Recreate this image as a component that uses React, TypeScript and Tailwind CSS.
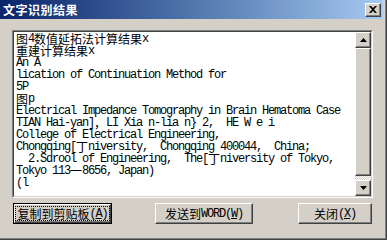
import React from 'react';

const lines = [
  '图4数值延拓法计算结果x',
  '重建计算结果x',
  'An A',
  'lication of Continuation Method for',
  '5P',
  '图p',
  'Electrical Impedance Tomography in Brain Hematoma Case',
  'TIAN Hai-yan]，LI Xia n-lia n} 2,  HE W e i',
  'College of Electrical Engineering,',
  'Chongqing[丁niversity,  Chongqing 400044,  China;',
  '  2.Sdrool of Engineering,  The[丁niversity of Tokyo,',
  'Tokyo 113一8656, Japan)',
  '(l',
];

// SimSun-like look: latin glyphs 6px wide, CJK glyphs 12px wide
function Mixed({ text }: { text: string }) {
  const parts = text.split(/([\u3000-\u9fff\uff00-\uffef]+)/).filter(Boolean);
  return (
    <>
      {parts.map((p, i) =>
        /[\u3000-\u9fff\uff00-\uffef]/.test(p) ? (
          <span key={i} className="font-['Noto_Sans_CJK_SC',sans-serif] text-[12px] leading-[12px] tracking-normal">{p}</span>
        ) : (
          <span key={i} className="font-['Liberation_Mono',monospace] text-[12px] leading-[12px] tracking-[-1.2px] whitespace-pre">{p}</span>
        )
      )}
    </>
  );
}

function Raised({ className = '', children }: { className?: string; children?: React.ReactNode }) {
  return (
    <div className={`bg-[#d4d0c8] border-t border-l border-white border-r border-b border-r-[#404040] border-b-[#404040] shadow-[inset_-1px_-1px_0_#808080] ${className}`}>
      {children}
    </div>
  );
}

function Button({ w, ml, focused, children }: { w: string; ml: string; focused?: boolean; children: React.ReactNode }) {
  if (focused) {
    return (
      <div className={`${w} ${ml} h-[21px] border border-black`}>
        <Raised className="w-full h-full flex items-center justify-center">
          <div className="border border-dotted border-black px-[1px] h-[15px] flex items-center leading-none text-black">
            {children}
          </div>
        </Raised>
      </div>
    );
  }
  return (
    <Raised className={`${w} ${ml} h-[21px] flex items-center justify-center leading-none text-black`}>
      {children}
    </Raised>
  );
}

export default function App() {
  return (
    <div className="w-[387px] h-[240px] bg-[#d4d0c8] border-r border-b border-[#404040] flex flex-col">
      <div className="flex-1 border-r border-b border-[#808080] flex flex-col pr-[2px]">
        {/* Title bar */}
        <div className="h-[19px] flex items-center justify-between bg-gradient-to-r from-[#0a246a] to-[#a6caf0] pl-[3px] pr-[2px]">
          <span className="text-white font-bold text-[12px] tracking-[0.5px] font-['Noto_Sans_CJK_SC',sans-serif] leading-none">文字识别结果</span>
          <Raised className="w-[16px] h-[14px] flex items-center justify-center">
            <svg width="8" height="7" viewBox="0 0 8 7">
              <path d="M0 0h2l2 2 2-2h2L5 3.5 8 7H6L4 5 2 7H0l3-3.5z" fill="#000" />
            </svg>
          </Raised>
        </div>

        {/* Text box */}
        <div className="ml-[12px] mt-[11px] w-[361px] h-[168px] border-t border-l border-[#808080] border-r border-b border-r-white border-b-white">
          <div className="w-full h-full border-t border-l border-[#404040] border-r border-b border-r-[#d4d0c8] border-b-[#d4d0c8] bg-white flex">
            <div className="flex-1 pl-[2px] pt-[1px] text-black overflow-hidden">
              {lines.map((l, i) => (
                <div key={i} className="h-[12px] leading-[12px] whitespace-pre flex items-center">
                  <Mixed text={l} />
                </div>
              ))}
            </div>
            {/* Scrollbar */}
            <div className="w-[16px] flex flex-col">
              <Raised className="h-[16px] flex items-center justify-center">
                <svg width="7" height="4" viewBox="0 0 7 4"><path d="M3.5 0L7 4H0z" fill="#000" /></svg>
              </Raised>
              <Raised className="h-[128px]" />
              <div className="flex-1 bg-[repeating-conic-gradient(#ffffff_0%_25%,#d4d0c8_0%_50%)] bg-[length:2px_2px]" />
              <Raised className="h-[16px] flex items-center justify-center">
                <svg width="7" height="4" viewBox="0 0 7 4"><path d="M0 0h7L3.5 4z" fill="#000" /></svg>
              </Raised>
            </div>
          </div>
        </div>

        {/* Buttons */}
        <div className="flex mt-[5px]">
          <Button w="w-[99px]" ml="ml-[13px]" focused>
            <Mixed text="复制到剪贴板(" />
            <span className="font-['Liberation_Mono',monospace] text-[12px] tracking-[-1.2px] underline">A</span>
            <Mixed text=")" />
          </Button>
          <Button w="w-[98px]" ml="ml-[43px]">
            <Mixed text="发送到WORD(" />
            <span className="font-['Liberation_Mono',monospace] text-[12px] tracking-[-1.2px] underline">W</span>
            <Mixed text=")" />
          </Button>
          <Button w="w-[74px]" ml="ml-[45px]">
            <Mixed text="关闭(" />
            <span className="font-['Liberation_Mono',monospace] text-[12px] tracking-[-1.2px] underline">X</span>
            <Mixed text=")" />
          </Button>
        </div>
      </div>
    </div>
  );
}
